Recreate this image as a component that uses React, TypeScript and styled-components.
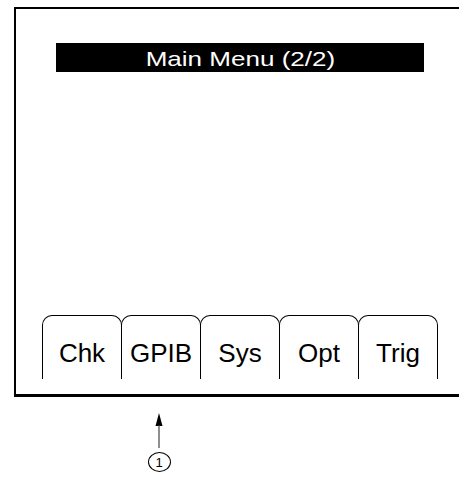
import React from "react";
import styled, { createGlobalStyle } from "styled-components";

const Global = createGlobalStyle`
  html, body {
    margin: 0;
    padding: 0;
    background: #ffffff;
    overflow: hidden;
  }
  body {
    width: 459px;
    height: 477px;
    font-family: "Liberation Sans", Arial, sans-serif;
    color: #000;
  }
`;

const Page = styled.div`
  display: flex;
  flex-direction: column;
  width: 459px;
  padding-top: 7px;
`;

const Frame = styled.div`
  box-sizing: border-box;
  display: flex;
  flex-direction: column;
  margin-left: 14px;
  width: 460px;
  height: 390px;
  border: 2px solid #000;
  border-right: none;
  border-bottom-width: 3px;
`;

const TitleBar = styled.div`
  margin: 34px 0 0 40px;
  width: 368px;
  height: 29px;
  background: #000;
  color: #fff;
  display: flex;
  align-items: center;
  justify-content: center;
  padding-top: 1px;
  box-sizing: border-box;
`;

const TitleText = styled.span`
  display: inline-block;
  font-size: 21px;
  line-height: 29px;
  transform: scaleX(1.24);
  white-space: nowrap;
`;

const Spacer = styled.div`
  flex: 1;
`;

const TabRow = styled.div`
  display: flex;
  margin: 0 0 15px 26px;
`;

const Tab = styled.div<{ $first?: boolean }>`
  box-sizing: border-box;
  width: 80px;
  height: 64px;
  margin-left: ${(p) => (p.$first ? "0" : "-1px")};
  border: 1px solid #000;
  border-bottom: none;
  border-radius: 10px 10px 0 0;
  padding-top: 22px;
  text-align: center;
  font-size: 26px;
  line-height: 30px;
  white-space: nowrap;
`;

const Callout = styled.div`
  display: flex;
  flex-direction: column;
  align-items: center;
  width: 24px;
  margin: 15px 0 0 147px;
`;

const Marker = styled.div`
  box-sizing: border-box;
  width: 23px;
  height: 20px;
  margin-top: 3px;
  border: 1.5px solid #000;
  border-radius: 50%;
  display: flex;
  align-items: center;
  justify-content: center;
  font-size: 13px;
  line-height: 13px;
`;

const tabs = ["Chk", "GPIB", "Sys", "Opt", "Trig"];

export default function App() {
  return (
    <>
      <Global />
      <Page>
        <Frame>
          <TitleBar>
            <TitleText>Main Menu (2/2)</TitleText>
          </TitleBar>
          <Spacer />
          <TabRow>
            {tabs.map((t, i) => (
              <Tab key={t} $first={i === 0}>
                {t}
              </Tab>
            ))}
          </TabRow>
        </Frame>
        <Callout>
          <svg width="24" height="37" viewBox="0 0 24 37">
            <polygon points="12,1 8.5,14 15.5,14" fill="#000" />
            <line x1="12" y1="13" x2="12" y2="36" stroke="#444" strokeWidth="1.2" />
          </svg>
          <Marker>1</Marker>
        </Callout>
      </Page>
    </>
  );
}
